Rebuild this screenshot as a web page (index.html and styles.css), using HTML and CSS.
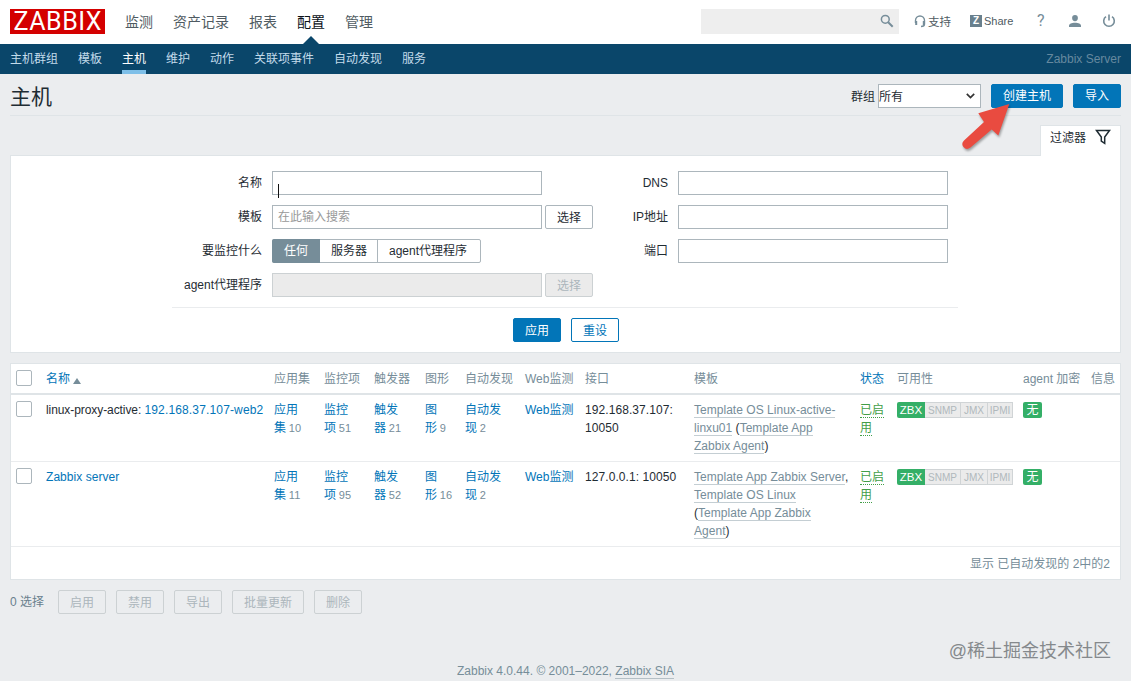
FILE: index.html
```html
<!DOCTYPE html>
<html lang="zh-CN">
<head>
<meta charset="utf-8">
<title>主机</title>
<link rel="stylesheet" href="styles.css">
</head>
<body>
<header class="top">
  <div class="logo"><span>ZABBIX</span></div>
  <nav class="main-nav"><a>监测</a><a>资产记录</a><a>报表</a><a class="active">配置</a><a>管理</a></nav>
  <div class="search">
    <svg width="14" height="14" viewBox="0 0 14 14"><circle cx="5.3" cy="5.3" r="3.9" fill="none" stroke="#768d99" stroke-width="1.5"/><path d="M8.2 8.2l4.5 4.5" stroke="#768d99" stroke-width="2"/></svg>
  </div>
  <div class="tools">
    <a class="support"><svg width="12" height="13" viewBox="0 0 12 13" fill="none" stroke="#768d99"><path d="M1.5 8V5.500a4.500 4.500 0 0 1 9 0V9c0 1.800-1.500 2.500-3.500 2.500" stroke-width="1.400"/><path d="M2.200 6v4M9.800 6v4" stroke-width="2"/></svg><span>支持</span></a>
    <a class="share"><i>Z</i><span>Share</span></a>
    <a class="help">?</a>
    <a class="user"><svg width="12" height="12" viewBox="0 0 12 12" fill="#768d99"><ellipse cx="6" cy="3.100" rx="2.900" ry="3.100"/><path d="M0 12V10.800C0 9 2.500 7.800 6 7.800S12 9 12 10.800V12z"/></svg></a>
    <a class="power"><svg width="14" height="14" viewBox="0 0 14 14" fill="none" stroke="#768d99" stroke-width="1.600"><path d="M4 2.600a5.300 5.300 0 1 0 6 0M7 .5v6"/></svg></a>
  </div>
</header>
<nav class="sub-nav">
  <a>主机群组</a><a>模板</a><a class="active">主机</a><a>维护</a><a>动作</a><a>关联项事件</a><a>自动发现</a><a>服务</a>
  <span class="server">Zabbix Server</span>
</nav>
<main>
  <div class="title-row">
    <h1>主机</h1>
    <span class="group-label">群组</span>
    <div class="select"><span>所有</span><svg width="9" height="6" viewBox="0 0 9 6" fill="none" stroke="#333" stroke-width="1.700"><path d="M.8.8l3.700 3.700L8.200.8"/></svg></div>
    <button class="btn primary create">创建主机</button>
    <button class="btn primary">导入</button>
    <svg class="pointer" width="52" height="54" viewBox="0 0 52 54"><path d="M49.300 3L38.300 34.500 31.700 28.500 10.500 46.500Q6.500 49.500 3.500 46 .8 42.500 4 39.500L24 21 18.300 12.300z" fill="#e94b40"/></svg>
  </div>
  <div class="tab-row"><div class="tab"><span>过滤器</span><svg width="16" height="16" viewBox="0 0 16 16" fill="none" stroke="#1f2c33" stroke-width="1.500"><path d="M1.500 1.500h13L9.700 8v6.300L6.300 12V8z"/></svg></div></div>
  <section class="filter">
    <div class="fields">
      <div class="left">
        <label>名称</label><div class="line"><div class="input"><i class="caret"></i></div></div>
        <label>模板</label><div class="line"><div class="input hint">在此输入搜索</div><button class="btn plain">选择</button></div>
        <label>要监控什么</label><div class="line"><div class="radio"><span class="on">任何</span><span>服务器</span><span>agent代理程序</span></div></div>
        <label>agent代理程序</label><div class="line"><div class="input off"></div><button class="btn off">选择</button></div>
      </div>
      <div class="right">
        <label>DNS</label><div class="input"></div>
        <label>IP地址</label><div class="input"></div>
        <label>端口</label><div class="input"></div>
      </div>
    </div>
    <div class="filter-actions"><button class="btn primary">应用</button><button class="btn outline">重设</button></div>
  </section>
  <section class="list">
    <table>
      <colgroup><col class="c-check"><col class="c-name"><col class="c-app"><col class="c-item"><col class="c-trig"><col class="c-graph"><col class="c-disc"><col class="c-web"><col class="c-if"><col class="c-tpl"><col class="c-status"><col class="c-avail"><col class="c-enc"><col class="c-info"></colgroup>
      <thead><tr><th><i class="check"></i></th><th><a>名称</a><i class="sort"></i></th><th>应用集</th><th>监控项</th><th>触发器</th><th>图形</th><th>自动发现</th><th>Web监测</th><th>接口</th><th>模板</th><th><a>状态</a></th><th>可用性</th><th>agent 加密</th><th>信息</th></tr></thead>
      <tbody>
        <tr><td><i class="check"></i></td><td><span class="host1">linux-proxy-active: <a>192.168.37.107-web2</a></span></td>
          <td><a>应用<br>集</a> <sup>10</sup></td><td><a>监控<br>项</a> <sup>51</sup></td><td><a>触发<br>器</a> <sup>21</sup></td><td><a>图<br>形</a> <sup>9</sup></td><td><a>自动发<br>现</a> <sup>2</sup></td><td><a>Web监测</a></td>
          <td class="iface">192.168.37.107:<br>10050</td>
          <td class="tpl"><u>Template OS Linux-active-</u><br><u>linxu01</u> (<u>Template App</u><br><u>Zabbix Agent</u>)</td>
          <td class="status"><u>已启</u><br><u>用</u></td>
          <td><div class="avail"><b>ZBX</b><span class="snmp">SNMP</span><span class="jmx">JMX</span><span class="ipmi">IPMI</span></div></td>
          <td><span class="none">无</span></td><td></td></tr>
        <tr><td><i class="check"></i></td><td><a class="host2">Zabbix server</a></td>
          <td><a>应用<br>集</a> <sup>11</sup></td><td><a>监控<br>项</a> <sup>95</sup></td><td><a>触发<br>器</a> <sup>52</sup></td><td><a>图<br>形</a> <sup>16</sup></td><td><a>自动发<br>现</a> <sup>2</sup></td><td><a>Web监测</a></td>
          <td class="iface">127.0.0.1: 10050</td>
          <td class="tpl"><u>Template App Zabbix Server</u>,<br><u>Template OS Linux</u><br>(<u>Template App Zabbix</u><br><u>Agent</u>)</td>
          <td class="status"><u>已启</u><br><u>用</u></td>
          <td><div class="avail"><b>ZBX</b><span class="snmp">SNMP</span><span class="jmx">JMX</span><span class="ipmi">IPMI</span></div></td>
          <td><span class="none">无</span></td><td></td></tr>
      </tbody>
    </table>
    <div class="count">显示 已自动发现的 2中的2</div>
  </section>
  <div class="bulk"><span>0 选择</span><button class="btn off">启用</button><button class="btn off">禁用</button><button class="btn off">导出</button><button class="btn off">批量更新</button><button class="btn off">删除</button></div>
</main>
<footer>Zabbix 4.0.44. © 2001–2022, <u>Zabbix SIA</u></footer>
<div class="watermark">@稀土掘金技术社区</div>
</body>
</html>
```
FILE: styles.css
```css
* { box-sizing: border-box; }
body {
  margin: 0;
  height: 681px;
  overflow: hidden;
  position: relative;
  background: #ebedef;
  color: #1f2c33;
  font: 12px/18px "Liberation Sans", "Noto Sans CJK SC", sans-serif;
}
a { color: #0275b8; text-decoration: none; white-space: nowrap; }
i { font-style: normal; }
u { text-decoration: none; }

.top { display: flex; height: 44px; padding: 0 10px; background: #fff; }
.logo {
  width: 95px; height: 25px; margin-top: 9px;
  display: flex; align-items: center; justify-content: center;
  background: #d40000; color: #fff;
  font: 25px/25px Roboto, sans-serif;
}
.logo span { letter-spacing: 0.5px; margin-right: -0.5px; }
.main-nav { display: flex; gap: 20px; margin-left: 20px; }
.main-nav a { position: relative; color: #4f5b62; font-size: 14px; line-height: 44px; }
.main-nav .active { color: #0a1218; }
.main-nav .active::after {
  content: ""; position: absolute; left: 6px; bottom: 0;
  border: 8px solid transparent; border-top: 0; border-bottom-color: #0a466a;
}
.search {
  display: flex; align-items: center; justify-content: flex-end;
  width: 198px; height: 25px; margin: 9px 0 0 auto; padding: 0 5px 2px 0;
  background: #eee;
}
.tools { display: flex; width: 222px; height: 42px; align-items: center; padding-left: 15px; }
.tools a { display: flex; align-items: center; color: #4f5b62; }
.support { gap: 2px; width: 56px; }
.support span { font-size: 11.5px; padding-top: 1px; }
.share { gap: 2px; width: 65px; font-size: 11px; }
.share i { width: 12px; height: 12px; background: #69808d; color: #fff; font: bold 10px/12px "Liberation Sans", sans-serif; text-align: center; }
.tools .help { width: 34px; padding-left: 2px; color: #768d99; font: 16px/20px Roboto, sans-serif; }
.user { width: 33px; }

.sub-nav { display: flex; gap: 20px; height: 30px; padding: 0 10px; background: #0a466a; }
.sub-nav a { color: #c3dbea; line-height: 30px; height: 30px; }
.sub-nav .active { color: #fff; border-bottom: 4px solid #7ebfe8; }
.server { margin-left: auto; color: #66899f; line-height: 30px; }

main { padding: 0 10px; }
.title-row { position: relative; display: flex; height: 42px; padding-top: 10px; border-bottom: 1px solid #dfe4e7; }
h1 { margin: 0 auto 0 0; font-weight: 400; font-size: 21px; line-height: 26px; }
.group-label { line-height: 26px; margin-right: 3px; }
.select {
  display: flex; align-items: center; justify-content: space-between;
  width: 103px; height: 24px; padding: 0 5px 0 0; margin-right: 10px;
  background: #fff; border: 1px solid #acb6bc; line-height: 24px;
}
.select span { padding-top: 2px; }
.pointer { position: absolute; left: 950px; top: 27px; z-index: 2; filter: drop-shadow(1px 2px 1px #0005); }
.btn {
  height: 24px; padding: 0 11px; margin: 0; border: 1px solid #acb6bc; border-radius: 2px;
  font: inherit; line-height: 22px; white-space: nowrap; color: #1f2c33; background: #fff;
}
.btn.primary { background: #0275b8; border-color: #0275b8; color: #fff; }
.btn.create { margin-right: 10px; }
.btn.outline { color: #0275b8; border-color: #0275b8; }
.btn.off { background: #ebebeb; border-color: #ccd1d3; color: #acb6bc; }
.line .btn, .bulk .btn, .filter-actions .btn { padding-top: 2px; line-height: 20px; }

.tab-row { display: flex; justify-content: flex-end; height: 39px; padding-top: 9px; }
.tab {
  position: relative; z-index: 1; display: flex; gap: 9px;
  width: 81px; height: 31px; padding: 3px 0 0 9px; margin-bottom: -1px;
  background: #fff; border: 1px solid #dfe4e7; border-bottom: 0;
}
.filter { height: 198px; background: #fff; border: 1px solid #dfe4e7; padding-top: 15px; }
.fields { display: flex; height: 137px; width: 786px; margin-left: 161px; border-bottom: 1px solid #eaecee; }
.left, .right { display: grid; grid-auto-rows: 24px; row-gap: 10px; column-gap: 10px; align-content: start; }
.left { grid-template-columns: 90px 322px; }
.right { grid-template-columns: 74px 270px; }
.fields label { text-align: right; line-height: 24px; white-space: nowrap; }
.line { display: flex; gap: 3px; }
.input { position: relative; width: 270px; height: 24px; border: 1px solid #acb6bc; background: #fff; padding: 0 5px; line-height: 22px; }
.hint { color: #999; }
.input.off { background: #ebebeb; border-color: #ccd1d3; }
.caret { position: absolute; left: 5px; top: 12px; width: 1px; height: 14px; background: #111; }
.radio { display: flex; height: 24px; width: 209px; border: 1px solid #acb6bc; border-radius: 2px; line-height: 22px; white-space: nowrap; }
.radio span { padding: 0 10px 0 11px; }
.radio span:last-child { border-left: 1px solid #acb6bc; }
.radio span.on { width: 48px; margin: -1px 0 -1px -1px; padding: 1px 12px 0; background: #768d99; color: #fff; border-radius: 2px 0 0 2px; }
.filter-actions { display: flex; justify-content: center; gap: 10px; padding: 10px 0 0 1px; }
.filter-actions .btn { width: 48px; padding-left: 0; padding-right: 0; }

.list { height: 217px; margin-top: 10px; background: #fff; border: 1px solid #dfe4e7; }
table { table-layout: fixed; width: 1109px; border-collapse: separate; border-spacing: 0; }
.c-check { width: 30px; } .c-name { width: 228px; } .c-app, .c-item { width: 50px; } .c-trig { width: 51px; }
.c-graph { width: 40px; } .c-disc, .c-web { width: 60px; } .c-if { width: 109px; } .c-tpl { width: 166px; }
.c-status { width: 37px; } .c-avail { width: 126px; } .c-enc { width: 68px; } .c-info { width: 34px; }
th, td { padding: 6px 5px 5px; text-align: left; vertical-align: top; white-space: nowrap; }
th { height: 31px; font-weight: 400; color: #768d99; border-bottom: 2px solid #dfe4e7; }
td { border-bottom: 1px solid #eaecee; }
tbody tr { height: 67px; }
tbody tr + tr { height: 85px; }
.check { display: block; width: 16px; height: 16px; border: 1px solid #acb6bc; border-radius: 2px; background: #fff; }
.sort { display: inline-block; margin-left: 3px; border: 4px solid transparent; border-top: 0; border-bottom: 6px solid #768d99; vertical-align: -1px; }
sup { margin-left: -0.500px; font-size: 11px; line-height: 1; vertical-align: baseline; color: #768d99; }
.host1 { letter-spacing: -0.08px; }
.host1 a { letter-spacing: 0.15px; }
.host2 { letter-spacing: 0.05px; }
.iface { letter-spacing: 0.08px; }
.tpl { letter-spacing: 0.03px; }
.tpl u { color: #768d99; border-bottom: 1px solid #c4ced3; }
.status u { color: #429e47; border-bottom: 1px dotted #429e47; }
.avail { display: flex; width: 116px; height: 16px; margin-top: 1px; font-size: 11.5px; line-height: 17px; text-align: center; }
.avail b { width: 28px; font-weight: 400; color: #fff; background: #34af67; border-radius: 2px 0 0 2px; }
.avail span { color: #b0b8bc; background: #ebebeb; border: 1px solid #d0d4d6; border-left: 0; line-height: 15px; font-size: 10px; }
.snmp { width: 36px; } .jmx { width: 27px; } .ipmi { width: 25px; }
.none { display: block; width: 19px; height: 16px; margin-top: 1px; border-radius: 2px; background: #34af67; color: #fff; text-align: center; line-height: 16px; }
.count { padding: 8px 10px 0; text-align: right; color: #768d99; }

.bulk { display: flex; gap: 10px; margin-top: 10px; line-height: 25px; color: #69808d; }
.bulk span { margin-right: 4px; }
.bulk .off { background: transparent; }
footer { margin-top: 47px; text-align: center; color: #768d99; }
footer u { border-bottom: 1px solid #b4bfc5; }
.watermark { position: absolute; right: 20px; top: 638px; color: #85898c; font-size: 18px; line-height: 26px; }
```
